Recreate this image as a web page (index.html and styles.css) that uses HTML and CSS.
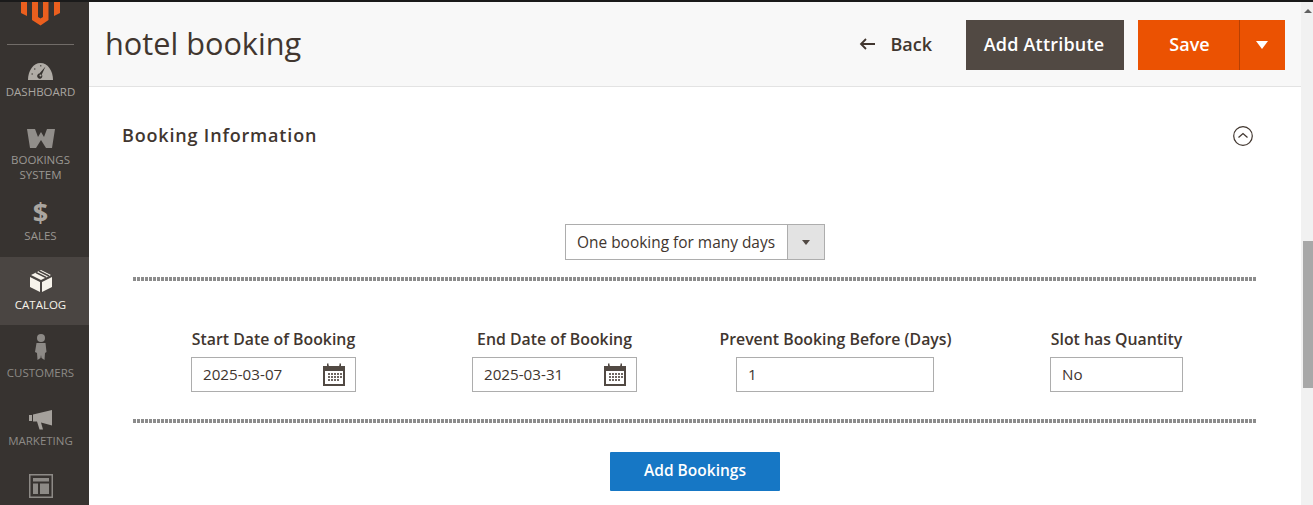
FILE: index.html
```html
<!DOCTYPE html>
<html lang="en">
<head>
<meta charset="utf-8">
<title>hotel booking</title>
<link rel="stylesheet" href="styles.css">
</head>
<body>
<div class="app">
  <nav class="sidebar">
    <div class="logo">
      <svg width="39" height="24" viewBox="21 2 39 24"><path fill="#eb5f1e" d="M21 0V13L27 16V0ZM54 0V16L60 13V0ZM32 0V20L40.500 25.500L48.500 20V0H43V17L40.500 18.500L38 17V0Z"/></svg>
    </div>
    <div class="logo-rule"></div>
    <a class="nav-item nav-dash">
      <svg class="nav-icon" width="25" height="17" viewBox="0 0 25 17"><path fill="#b0aca6" d="M0 17C0 7.500 5.500 0 12.500 0S25 7.500 25 17z"/><path fill="#373330" d="M17.500 3.500L13.800 11.500a2.600 2.600 0 1 1-2.400-1z"/><circle cx="12.500" cy="12.500" r="1" fill="#b0aca6"/><path stroke="#5c5854" stroke-width="1.400" d="M3.500 11h1.400M6 6h1.400M12 2.800h1.400"/></svg>
      <span>Dashboard</span>
    </a>
    <a class="nav-item nav-book">
      <svg class="nav-icon" width="28" height="19" viewBox="0 0 28 19"><path fill="#918e8a" d="M0 0H8L11 8L14 3L17 8L20 0H28L25 19H19L14 11L9 19H3Z"/></svg>
      <span>Bookings<br>System</span>
    </a>
    <a class="nav-item nav-sales">
      <span class="dollar">$</span>
      <span>Sales</span>
    </a>
    <a class="nav-item nav-active">
      <svg class="nav-icon" width="22" height="22" viewBox="0 0 22 22"><path fill="#f7f3eb" d="M11 0l10 5-10 5L1 5zM0 7l10 5v10L0 17zM22 7v10l-10 5V12z"/><path stroke="#4a4542" stroke-width="1.400" d="M6 2.500l10 5M9 1l10 5"/></svg>
      <span>Catalog</span>
    </a>
    <a class="nav-item nav-cust">
      <svg class="nav-icon" width="12" height="26" viewBox="0 0 12 26"><circle cx="6" cy="4" r="4" fill="#8d8a86"/><path fill="#8d8a86" d="M1.500 9h9l1 9-1.500 1-.5 7-3-2-.5-3-.5 3-3 2-.5-7L0 18z"/></svg>
      <span>Customers</span>
    </a>
    <a class="nav-item nav-mkt">
      <svg class="nav-icon" width="24" height="20" viewBox="0 0 24 20"><path fill="#a5a19c" d="M0 5h3v6H0zM4 4.500L23 0v15.500l-11-3 2 7h-3.500L8 11.500H4z"/></svg>
      <span>Marketing</span>
    </a>
    <a class="nav-item nav-content">
      <svg class="nav-icon" width="24" height="24" viewBox="0 0 24 24"><path fill="none" stroke="#8d8a86" stroke-width="1.500" d="M.75.75h22.500v22.500H.75z"/><path fill="#8d8a86" d="M4 4h16v3.500H4zM4 9.500h5V20H4zM11 9.500h9V20h-9z"/></svg>
    </a>
  </nav>
  <main class="main">
    <header class="page-head">
      <h1 class="page-title">hotel booking</h1>
      <div class="actions">
        <a class="back">
          <svg width="16" height="12" viewBox="0 0 16 12"><path fill="none" stroke="#41362f" stroke-width="1.800" d="M16 6H2M7 1L2 6l5 5"/></svg>
          <span>Back</span>
        </a>
        <button class="btn-attr" type="button">Add Attribute</button>
        <div class="split">
          <button class="split-main" type="button">Save</button>
          <button class="split-toggle" type="button" aria-label="More"><span class="tri"></span></button>
        </div>
      </div>
    </header>
    <section class="panel">
      <div class="panel-head">
        <h2 class="panel-title">Booking Information</h2>
        <svg width="20" height="20" viewBox="0 0 20 20"><circle cx="10" cy="10" r="9.300" fill="none" stroke="#41362f" stroke-width="1.200"/><path fill="none" stroke="#41362f" stroke-width="1.300" d="M5.500 11.500L10 7.500l4.500 4"/></svg>
      </div>
      <div class="select-row">
        <div class="select">
          <span class="select-value">One booking for many days</span>
          <span class="select-arrow"><span class="tri-small"></span></span>
        </div>
      </div>
      <div class="dots dots-top"></div>
      <div class="fields">
        <div class="field">
          <label class="field-label">Start Date of Booking</label>
          <div class="input input-date">
            <span>2025-03-07</span>
            <svg width="24" height="24" viewBox="0 0 24 24"><use href="#cal"/></svg>
          </div>
        </div>
        <div class="field">
          <label class="field-label">End Date of Booking</label>
          <div class="input input-date">
            <span>2025-03-31</span>
            <svg width="24" height="24" viewBox="0 0 24 24"><use href="#cal"/></svg>
          </div>
        </div>
        <div class="field">
          <label class="field-label">Prevent Booking Before (Days)</label>
          <div class="input input-days"><span>1</span></div>
        </div>
        <div class="field">
          <label class="field-label">Slot has Quantity</label>
          <div class="input input-slot"><span>No</span></div>
        </div>
      </div>
      <div class="dots dots-bottom"></div>
      <div class="add-row">
        <button class="btn-add" type="button">Add Bookings</button>
      </div>
    </section>
  </main>
  <div class="scrollbar">
    <span class="scroll-up"></span>
    <span class="scroll-thumb"></span>
  </div>
</div>
<svg class="defs" width="0" height="0">
  <defs>
    <g id="cal">
      <path fill="#514943" d="M1 3h4v-.5h2V3h10v-.5h2V3h4v20H1z"/>
      <path fill="#fff" d="M3 8h18v13H3z"/>
      <path fill="#514943" d="M5 0.500h1.500V5H5zM17.500 0.500H19V5h-1.500z"/>
      <path fill="#6f6762" d="M6 10h2v2H6zM9 10h2v2H9zM12 10h2v2h-2zM15 10h2v2h-2zM18 10h2v2h-2zM6 13h2v2H6zM9 13h2v2H9zM12 13h2v2h-2zM15 13h2v2h-2zM18 13h2v2h-2zM6 16h2v2H6zM9 16h2v2H9zM12 16h2v2h-2zM15 16h2v2h-2z"/>
    </g>
  </defs>
</svg>
</body>
</html>
```
FILE: styles.css
```css
* { box-sizing: border-box; }
html, body { margin: 0; height: 100%; overflow: hidden; background: #fff; }
body { font-family: "Open Sans", sans-serif; color: #41362f; }
.defs { position: absolute; }
.app { display: flex; height: 505px; border-top: 2px solid #1a1a1a; overflow: hidden; }

.sidebar { width: 89px; flex: none; background: #373330; display: flex; flex-direction: column; align-items: stretch; overflow: hidden; }
.logo { height: 24px; display: flex; justify-content: center; overflow: hidden; padding-right: 8px; }
.logo-rule { height: 1px; margin: 18px 15px 0 7px; background: #716c68; }
.nav-item { display: flex; flex-direction: column; align-items: center; padding-right: 8px; font-size: 11.500px; line-height: 15px; text-transform: uppercase; color: #aaa6a0; text-align: center; white-space: nowrap; }
.nav-item span { display: block; }
.nav-icon { display: block; }
.nav-dash { margin-top: 18px; }
.nav-dash .nav-icon { margin-bottom: 4px; }
.nav-book { margin-top: 30px; color: #9a9792; }
.nav-book .nav-icon { margin-bottom: 4px; }
.nav-sales { margin-top: 13px; color: #9a9792; }
.nav-item .dollar { font-size: 27px; line-height: 33px; font-weight: 700; color: #aaa6a0; }
.nav-active { margin-top: 14px; height: 68px; padding-top: 13px; background: #4a4542; color: #f7f3eb; }
.nav-active .nav-icon { margin-bottom: 5px; }
.nav-cust { margin-top: 9px; color: #8d8a86; }
.nav-cust .nav-icon { margin-bottom: 5px; }
.nav-mkt { margin-top: 30px; color: #8d8a86; }
.nav-mkt .nav-icon { margin-bottom: 3px; }
.nav-content { margin-top: 26px; }

.main { flex: 1; min-width: 0; display: flex; flex-direction: column; }
.page-head { height: 85px; flex: none; background: #f8f8f8; border-bottom: 1px solid #e3e3e3; display: flex; align-items: center; justify-content: space-between; padding: 2px 16px 0 16px; }
.page-title { margin: 0 0 4px; font-size: 30.700px; font-weight: 400; line-height: 40px; color: #41362f; }
.actions { display: flex; align-items: center; }
.back { display: flex; align-items: center; gap: 15px; font-size: 18px; font-weight: 600; color: #41362f; margin: 0 34px 2px 0; }
button { font-family: inherit; border: 0; cursor: pointer; }
.btn-attr { width: 158px; height: 50px; padding: 0 2px 2px 0; background: #514943; color: #fff; font-size: 18px; font-weight: 600; letter-spacing: .2px; }
.split { display: flex; margin-left: 14px; height: 50px; }
.split-main { width: 102px; padding: 0 0 2px 2px; background: #eb5202; color: #fff; font-size: 18px; font-weight: 600; border-right: 1px solid #b84002; }
.split-toggle { width: 45px; background: #eb5202; display: flex; align-items: center; justify-content: center; padding: 0 2px 0 0; }
.tri { width: 0; height: 0; border-left: 6px solid transparent; border-right: 6px solid transparent; border-top: 8px solid #fff; }

.panel { flex: 1; padding: 0 44px; }
.panel-head { display: flex; justify-content: space-between; align-items: center; margin: 38px 4px 0 -11px; height: 22px; }
.panel-title { margin: 0 0 2px; font-size: 18px; font-weight: 600; letter-spacing: .82px; color: #41362f; }
.select-row { display: flex; justify-content: center; margin-top: 77px; }
.select { width: 260px; height: 36px; border: 1px solid #adadad; display: flex; background: #fff; }
.select-value { flex: 1; font-size: 15.450px; line-height: 34px; padding-left: 11px; color: #41362f; }
.select-arrow { width: 37px; border-left: 1px solid #adadad; background: #e3e3e3; display: flex; align-items: center; justify-content: center; }
.tri-small { width: 0; height: 0; border-left: 4px solid transparent; border-right: 4px solid transparent; border-top: 5px solid #514943; }
.dots { height: 4px; background: repeating-linear-gradient(90deg, #8c8c8c 0 3px, transparent 3px 4px); }
.dots-top { margin-top: 17px; }
.fields { display: grid; grid-template-columns: repeat(4, 1fr); margin-top: 48px; }
.field { display: flex; flex-direction: column; align-items: center; }
.field-label { font-size: 15.850px; font-weight: 600; line-height: 20px; color: #41362f; white-space: nowrap; }
.input { height: 35px; margin-top: 8px; border: 1px solid #adadad; background: #fff; font-size: 15.200px; padding: 0 0 2px 11px; display: flex; align-items: center; justify-content: space-between; color: #41362f; }
.input-date { width: 165px; padding-right: 9px; }
.input-date svg { margin-top: 2px; }
.input-days { width: 198px; margin-right: 1px; }
.input-slot { width: 133px; }
.dots-bottom { margin-top: 27px; }
.add-row { display: flex; justify-content: center; margin-top: 29px; }
.btn-add { width: 170px; height: 39px; padding: 0 0 3px; background: #1677c5; color: #fff; font-size: 15.500px; font-weight: 600; border-radius: 1px; }

.scrollbar { width: 12px; flex: none; background: #f1f1f1; padding-left: 2px; position: relative; }
.scroll-up { position: absolute; top: 7px; left: 3px; width: 0; height: 0; border-left: 4px solid transparent; border-right: 4px solid transparent; border-bottom: 4px solid #606060; }
.scroll-thumb { position: absolute; top: 239px; left: 2px; width: 10px; height: 147px; background: #a8a8a8; }
```
